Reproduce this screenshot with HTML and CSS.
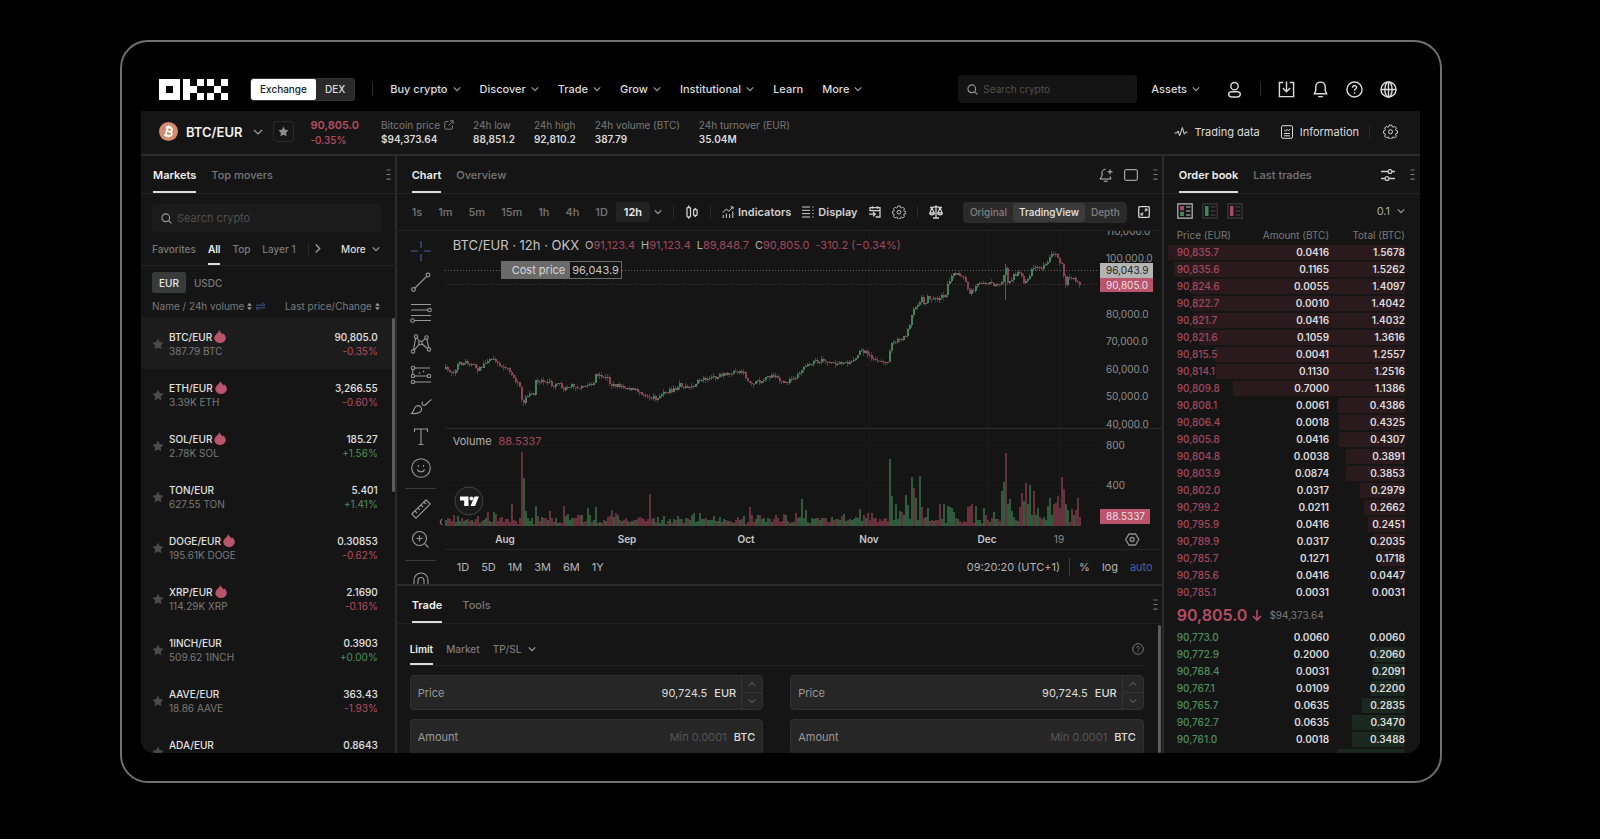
FILE: index.html
```
<!DOCTYPE html>
<html lang="en">
<head>
<meta charset="utf-8">
<title>BTC/EUR | OKX</title>
<link rel="stylesheet" href="styles.css">
</head>
<body>
<svg class="sprite" aria-hidden="true">
  <symbol id="chev" viewBox="0 0 10 10"><path d="M1 3l4 4 4-4"/></symbol>
  <symbol id="up" viewBox="0 0 10 10"><path d="M1 7l4-4 4 4"/></symbol>
  <symbol id="next" viewBox="0 0 10 10"><path d="M3 0.500l4.500 4.500L3 9.500"/></symbol>
  <symbol id="search" viewBox="0 0 12 12"><circle cx="5.200" cy="5.200" r="4.200"/><path d="M8.300 8.300L11.300 11.300"/></symbol>
  <symbol id="star" viewBox="0 0 12 12"><path class="solid" d="M6 0.600l1.700 3.500 3.900.6-2.800 2.700.65 3.850L6 9.450l-3.450 1.800.65-3.850L.4 4.700l3.900-.6z"/></symbol>
  <symbol id="flame" viewBox="0 0 12 13"><path class="solid" d="M5 0C5.600 1.600 7.600 2.600 8.600 4.600 8.900 4.200 9.200 3.800 9.300 3.200 10.800 4.800 11.800 6.300 11.800 8A5.700 5 0 0 1 .3 8C.3 6 1.600 4.600 3 3.400 4.200 2.400 5 1.400 5 0z"/></symbol>
  <symbol id="gear" viewBox="0 0 20 20"><path d="M8.300 1.500h3.400l.6 2.200 1.300.6 2-1.100 2.300 2.300-1.100 2 .6 1.300 2.100.6v2.800l-2.200.7-.5 1.400 1 1.900-2.200 2.300-2-1.100-1.300.5-.6 2.200H8.300l-.6-2.200-1.300-.5-2 1.100-2.300-2.300 1.100-1.900-.5-1.400-2.200-.7V9.400l2.100-.6.600-1.300-1.100-2L4.400 3.200l2 1.100 1.300-.6z"/><circle cx="10" cy="10.300" r="2.700"/></symbol>
  <symbol id="dots" viewBox="0 0 6 14"><path d="M0.500 1.500h5M0.500 7h5M0.500 12.500h5"/></symbol>
  <symbol id="sort" viewBox="0 0 6 10"><path class="solid" d="M3 0.500L5.800 4H.2zM3 9.500L5.800 6H.2z"/></symbol>
</svg>

<div class="frame">
  <header class="top">
    <a class="logo" href="#" aria-label="OKX"><svg viewBox="0 0 69 21" shape-rendering="crispEdges"><path fill-rule="evenodd" d="M0 0h21v21H0zM7 7v7h7V7z"/><path d="M24 0h7v7h7v7h-7v7h-7zM38 0h7v7h-7zM38 14h7v7h-7zM48 0h7v7h-7zM62 0h7v7h-7zM55 7h7v7h-7zM48 14h7v7h-7zM62 14h7v7h-7z"/></svg></a>
    <div class="switch"><button class="on">Exchange</button><button>DEX</button></div>
    <i class="rule"></i>
    <nav class="nav">
      <a href="#">Buy crypto<svg class="ch"><use href="#chev"/></svg></a>
      <a href="#">Discover<svg class="ch"><use href="#chev"/></svg></a>
      <a href="#">Trade<svg class="ch"><use href="#chev"/></svg></a>
      <a href="#">Grow<svg class="ch"><use href="#chev"/></svg></a>
      <a href="#">Institutional<svg class="ch"><use href="#chev"/></svg></a>
      <a href="#">Learn</a>
      <a href="#">More<svg class="ch"><use href="#chev"/></svg></a>
    </nav>
    <label class="search top-search"><svg><use href="#search"/></svg><input type="text" placeholder="Search crypto" aria-label="Search crypto"></label>
    <a class="assets" href="#">Assets<svg class="ch"><use href="#chev"/></svg></a>
    <button class="ic user" aria-label="Account"><svg viewBox="0 0 18 18"><circle cx="9" cy="5.500" r="3.900"/><path d="M5.500 11.300h7a3.200 2.900 0 0 1 0 5.700h-7a3.200 2.900 0 0 1 0-5.700z"/></svg></button>
    <i class="rule"></i>
    <div class="tools">
      <button class="ic" aria-label="Download"><svg viewBox="0 0 18 18"><path d="M5.500 1.500H1.500v15h15v-15h-4M9 0.500v10.500M5.200 7.500L9 11.300l3.800-3.800"/></svg></button>
      <button class="ic" aria-label="Notifications"><svg viewBox="0 0 18 18"><path d="M9 1.200c-3.300 0-5 2.300-5 5.200v3.800L2.500 13.500h13L14 10.200V6.400c0-2.900-1.700-5.200-5-5.200zM6.500 16.500h5"/></svg></button>
      <button class="ic" aria-label="Help"><svg viewBox="0 0 18 18"><circle cx="9" cy="9" r="8"/><path d="M6.800 7.200c0-2.900 4.500-2.700 4.400-.2 0 1.500-2.200 1.600-2.200 3.300M9 11.900v1.500"/></svg></button>
      <button class="ic" aria-label="Language"><svg viewBox="0 0 18 18"><circle cx="9" cy="9" r="8"/><ellipse cx="9" cy="9" rx="3.800" ry="8"/><path d="M1 9h16M9 1v16"/></svg></button>
    </div>
  </header>

  <div class="screen">
    <section class="ticker">
      <svg class="coin" viewBox="0 0 19 19"><circle cx="9.500" cy="9.500" r="9.500" fill="#d48a6c"/><g transform="rotate(12 9.500 9.500)" fill="none" stroke="#fff" stroke-width="1.700"><path d="M6 5.300h4.500a2 2 0 0 1 0 4.100H7.500M7.500 9.400h3.600a2.100 2.100 0 0 1 0 4.300H6M7.500 5.300v8.400"/><path stroke-width="1.200" d="M8.500 3.500v2M10.400 3.500v2M8.500 13.500v2M10.400 13.500v2"/></g></svg>
      <h1>BTC/EUR</h1>
      <svg class="ch pairch"><use href="#chev"/></svg>
      <button class="fav" aria-label="Favorite"><svg><use href="#star"/></svg></button>
      <div class="last red"><b>90,805.0</b><span>-0.35%</span></div>
      <dl class="stats">
        <div><dt>Bitcoin price <svg class="ext" viewBox="0 0 10 10"><path d="M4.500 1.500H2a1.200 1.200 0 0 0-1.200 1.200V8A1.200 1.200 0 0 0 2 9.200h5.300A1.200 1.200 0 0 0 8.500 8V5.500M6 .8h3.200V4M9 1L4.500 5.500"/></svg></dt><dd>$94,373.64</dd></div>
        <div><dt>24h low</dt><dd>88,851.2</dd></div>
        <div><dt>24h high</dt><dd>92,810.2</dd></div>
        <div><dt>24h volume (BTC)</dt><dd>387.79</dd></div>
        <div><dt>24h turnover (EUR)</dt><dd>35.04M</dd></div>
      </dl>
      <div class="links">
        <a href="#"><svg class="i14" viewBox="0 0 14 14"><path d="M0.500 8h2.300l1.200-2 1.600 4.800L8.400 2.500l1.900 6.700 1.200-2h2"/></svg>Trading data</a>
        <a href="#"><svg class="i14" viewBox="0 0 14 14"><rect x="1.500" y=".7" width="11" height="12.600" rx="1.500"/><path d="M4 8.500h6M4 10.800h6M4.200 4.800l1.400 1.400 1.500-1.800 1.400 1.400L10 4"/></svg>Information</a>
        <i class="rule"></i>
        <button class="ic gear" aria-label="Settings"><svg><use href="#gear"/></svg></button>
      </div>
    </section>

    <main class="cols">
      <section class="panel markets">
        <div class="tabs"><button class="on">Markets</button><button>Top movers</button><svg class="dots"><use href="#dots"/></svg></div>
        <label class="search"><svg><use href="#search"/></svg><input type="text" placeholder="Search crypto" aria-label="Search markets"></label>
        <div class="filters">
          <button>Favorites</button><button class="on">All</button><button>Top</button><button>Layer 1</button>
          <i class="rule"></i><svg class="ch nx"><use href="#next"/></svg>
          <button class="more">More<svg class="ch"><use href="#chev"/></svg></button>
        </div>
        <div class="quotes"><button class="on">EUR</button><button>USDC</button></div>
        <div class="list">
          <table class="pairs">
            <thead><tr><th colspan="2">Name / 24h volume <svg class="sort"><use href="#sort"/></svg> <svg class="swap" viewBox="0 0 11 10"><path d="M0.500 3.500h10M7.500 .8l3 2.700M10.500 6.500H.5M3.500 9.200L.5 6.500"/></svg></th><th>Last price/Change <svg class="sort"><use href="#sort"/></svg></th></tr></thead>
            <tbody id="pairs"></tbody>
          </table>
          <i class="thumb"></i>
        </div>
      </section>

      <div class="mid">
        <section class="panel chart">
          <div class="tabs wide"><button class="on">Chart</button><button>Overview</button>
            <span class="tabtools">
              <svg class="i14" viewBox="0 0 14 14"><path d="M6.500 1.200C4 1.200 3 3 3 5v3L1 11h11l-1-2.500M4.800 13.200h4M8.500 3.800h5M11 1.300v5"/></svg>
              <svg class="i14" viewBox="0 0 14 14"><rect x=".7" y="1.700" width="12.600" height="10.600" rx="1"/></svg>
            </span>
            <svg class="dots"><use href="#dots"/></svg></div>
          <div class="bar">
            <div class="frames"><button>1s</button><button>1m</button><button>5m</button><button>15m</button><button>1h</button><button>4h</button><button>1D</button><button class="on">12h</button></div>
            <svg class="ch"><use href="#chev"/></svg>
            <i class="rule"></i>
            <button class="ic" aria-label="Candles"><svg class="i14" viewBox="0 0 14 14"><rect x="2" y="2.500" width="3.500" height="9.500" rx="1"/><path d="M3.700 .5v2M3.700 12v1.700M10.300 3v1.500M10.300 10.500v1.500"/><rect x="8.600" y="4.500" width="3.500" height="6" rx="1"/></svg></button>
            <i class="rule"></i>
            <button class="tool"><svg class="i12" viewBox="0 0 12 12"><path d="M1.200 12V9M4.400 12V7.500M7.600 12V8M10.800 12V5.500M.7 6.500L4.500 3l2.300 2.300L11 1M8.500 .9H11v2.300"/></svg>Indicators</button>
            <button class="tool"><svg class="i12" viewBox="0 0 12 12"><path d="M0 1h8M0 4.300h8M0 7.600h8M0 11h8M10.300 1h1.200M10.300 4.300h1.200M10.300 7.600h1.200M10.300 11h1.200"/></svg>Display</button>
            <button class="ic" aria-label="Go to date"><svg class="i12" viewBox="0 0 12 12"><path d="M1 5V1.700h10V11H6.500M3.500 .3v2.500M8.500 .3v2.500M1 4.700h10M0 8.200h6M4 6l2.300 2.200L4 10.400"/></svg></button>
            <button class="ic" aria-label="Chart settings"><svg class="i14"><use href="#gear"/></svg></button>
            <i class="rule"></i>
            <button class="ic" aria-label="Compare"><svg class="i14" viewBox="0 0 14 14"><path d="M7 .5v12M4 13h6M1 2.500h2.500L7 1.500l3.500 1H13M3 2.800L.8 8h4.400zM11 2.800L8.800 8h4.400z"/><path d="M.8 8a2.200 1.800 0 0 0 4.400 0M8.800 8a2.200 1.800 0 0 0 4.400 0"/></svg></button>
            <div class="seg"><button>Original</button><button class="on">TradingView</button><button>Depth</button></div>
            <button class="ic full" aria-label="Full screen"><svg class="i12" viewBox="0 0 12 12"><rect x=".7" y=".7" width="10.600" height="10.600" rx="1"/><path class="solid" d="M6.500 2.500h3v3zM2.500 6.500v3h3z"/><path d="M8.500 3.500L6.800 5.200M3.500 8.500l1.700-1.700"/></svg></button>
          </div>
          <div class="work">
            <div class="draw">
              <svg class="cross" viewBox="0 0 20 20"><path d="M0 10h7M13 10h7M10 0v7M10 13v7"/></svg>
              <svg viewBox="0 0 20 20"><circle cx="2.500" cy="17.500" r="1.900"/><circle cx="17" cy="3" r="1.900"/><path d="M4 16L15.500 4.500"/></svg>
              <svg viewBox="0 0 20 20"><path d="M0 1.500h20M0 7h17M0 12.500h20M3.500 17.500H20"/><circle cx="18.500" cy="7" r="1.800"/><circle cx="1.500" cy="17.500" r="1.800"/></svg>
              <svg viewBox="0 0 20 20"><circle cx="5" cy="2.500" r="1.700"/><circle cx="15.500" cy="3.500" r="1.700"/><circle cx="9.500" cy="9" r="1.700"/><circle cx="2" cy="17.500" r="1.700"/><circle cx="18" cy="15.500" r="1.700"/><path d="M4.700 4.200L2.500 16M15.800 5.200l2 8.600M5.800 4l3 3.700M14.300 4.700l-3.500 3.200M3.200 16.200l5.200-6M10.900 10l5.700 4.500"/></svg>
              <svg viewBox="0 0 20 20"><path d="M3.500 3H19M3.500 11h13M3.500 17H20M1.700 5v4M8 8.500l1-1M12 7l1-1"/><circle cx="2" cy="3" r="1.700"/><circle cx="2" cy="11" r="1.700"/><circle cx="18" cy="11" r="1.700"/><circle cx="2" cy="17" r="1.700"/></svg>
              <svg viewBox="0 0 20 20"><path d="M0.500 17.500c2.500-1.500 2-6 5-7.500 3-1.300 6 1.500 5 4.300-1.500 3.500-6 3.500-10 3.200zM11.500 5.500c-1 2-.5 4 2 4C16 8 18 5 20.500 3.500"/></svg>
              <svg viewBox="0 0 20 20"><path d="M3.500 5V2h13v3M10 2v15.500M7.500 17.500h5"/></svg>
              <svg viewBox="0 0 20 20"><circle cx="10" cy="10" r="9.300"/><path d="M7.500 7v1.800M12.500 7v1.800M6.500 11.500c1 3 6 3 7 0"/></svg>
              <i class="hr"></i>
              <svg viewBox="0 0 20 20"><path d="M0.800 15L15 .8 19.200 5 5 19.200zM4 12l2 2M7 9l2 2M10 6l2 2M13 3l2 2"/></svg>
              <svg viewBox="0 0 20 20"><circle cx="8.500" cy="8.500" r="7"/><path d="M13.700 13.700l3.800 3.800M8.500 5.500v6M5.500 8.500h6"/></svg>
              <i class="hr"></i>
              <svg viewBox="0 0 20 20"><path d="M3 20V9a7 7 0 0 1 14 0v11M7 20V9.500a3 3 0 0 1 6 0V20"/></svg>
            </div>
            <div class="plotwrap">
              <div class="plot">
                <svg id="plot" class="plotsvg" viewBox="0 0 717 318" role="img" aria-label="BTC/EUR 12h price and volume"></svg>
                <p class="ohlc"><span class="sym">BTC/EUR · 12h · OKX</span><span>O<em>91,123.4</em></span><span>H<em>91,123.4</em></span><span>L<em>89,848.7</em></span><span>C<em>90,805.0</em></span><em>-310.2 (−0.34%)</em></p>
                <p class="cost"><span>Cost price</span><b>96,043.9</b></p>
                <p class="vol">Volume<em>88.5337</em></p>
                <svg class="tv" viewBox="0 0 30 30"><circle cx="15" cy="15" r="14"/><path class="solid" d="M6 10.500h8.500v9.500h-4.300v-5.500H6zM20.500 10.500H25L21 20h-4.500z"/><circle class="solid" cx="17.500" cy="12.500" r="2"/></svg>
                <svg class="fold" viewBox="0 0 4 8"><path d="M3.200 .8L1 4l2.200 3.200"/></svg>
              </div>
              <div class="range">
                <button>1D</button><button>5D</button><button>1M</button><button>3M</button><button>6M</button><button>1Y</button>
                <time>09:20:20 (UTC+1)</time><i class="rule"></i><button>%</button><button>log</button><button class="blue">auto</button>
              </div>
            </div>
          </div>
        </section>
        <section class="panel trade">
          <div class="tabs wide"><button class="on">Trade</button><button>Tools</button><svg class="dots"><use href="#dots"/></svg></div>
          <div class="types"><button class="on">Limit</button><button>Market</button><button>TP/SL<svg class="ch"><use href="#chev"/></svg></button>
            <svg class="help" viewBox="0 0 12 12"><circle cx="6" cy="6" r="5.300"/><path d="M4.600 4.900c0-1.900 2.900-1.800 2.900-.1 0 1-1.500 1-1.500 2.200M6 7.900v1"/></svg></div>
          <form class="forms">
            <div class="field"><label for="p1">Price</label><input id="p1" type="text" value="90,724.5"><b>EUR</b><span class="step"><button type="button" aria-label="Increase"><svg><use href="#up"/></svg></button><button type="button" aria-label="Decrease"><svg><use href="#chev"/></svg></button></span></div>
            <div class="field"><label for="p2">Price</label><input id="p2" type="text" value="90,724.5"><b>EUR</b><span class="step"><button type="button" aria-label="Increase"><svg><use href="#up"/></svg></button><button type="button" aria-label="Decrease"><svg><use href="#chev"/></svg></button></span></div>
            <div class="field"><label for="a1">Amount</label><input id="a1" type="text" placeholder="Min 0.0001"><b>BTC</b></div>
            <div class="field"><label for="a2">Amount</label><input id="a2" type="text" placeholder="Min 0.0001"><b>BTC</b></div>
          </form>
          <i class="thumb"></i>
        </section>
      </div>

      <section class="panel book">
        <div class="tabs"><button class="on">Order book</button><button>Last trades</button>
          <svg class="i14 sliders" viewBox="0 0 14 14"><path d="M0 3.500h7M11 3.500h3M0 10.500h4M8 10.500h6"/><circle cx="9" cy="3.500" r="1.900"/><circle cx="6" cy="10.500" r="1.900"/></svg>
          <svg class="dots"><use href="#dots"/></svg></div>
        <div class="views">
          <button class="view on" aria-label="Both sides"><svg viewBox="0 0 16 16"><path class="frm" d="M.8.8h14.400v14.400H.8z"/><path class="r" d="M3 3h4v4.300H3z"/><path class="g" d="M3 8.700h4V13H3z"/><path d="M9 4h4.500M9 8h4.500M9 12h4.500"/></svg></button>
          <button class="view" aria-label="Bids"><svg viewBox="0 0 16 16"><path class="frm" d="M.8.8h14.400v14.400H.8z"/><path class="g" d="M3 3h3.500v10H3z"/><path d="M8.500 4h5M8.500 8h5M8.500 12h5"/></svg></button>
          <button class="view" aria-label="Asks"><svg viewBox="0 0 16 16"><path class="frm" d="M.8.8h14.400v14.400H.8z"/><path class="r" d="M3 3h3.500v10H3z"/><path d="M8.500 4h5M8.500 8h5M8.500 12h5"/></svg></button>
          <button class="tick">0.1<svg class="ch"><use href="#chev"/></svg></button>
        </div>
        <table class="orders">
          <thead><tr><th>Price (EUR)</th><th>Amount (BTC)</th><th>Total (BTC)</th></tr></thead>
          <tbody id="asks" class="asks"></tbody>
        </table>
        <p class="now"><b>90,805.0</b><svg viewBox="0 0 10 12"><path d="M5 1v10M1 7l4 4 4-4"/></svg><span>$94,373.64</span></p>
        <table class="orders"><tbody id="bids" class="bids"></tbody></table>
      </section>
    </main>
  </div>
</div>
<script src="app.js"></script>
</body>
</html>
```
FILE: styles.css
```
* { box-sizing: border-box; }
html, body { margin: 0; }
body {
  height: 100vh;
  padding: 40px 158px 56px 120px;
  background: #000;
  color: #dcdcdc;
  font: 11px/14px Inter, "Liberation Sans", sans-serif;
  overflow: hidden;
}
h1, p, dl, dd { margin: 0; }
a { color: inherit; text-decoration: none; }
button { padding: 0; border: 0; background: none; color: inherit; font: inherit; display: flex; align-items: center; cursor: pointer; }
input { min-width: 0; padding: 0; border: 0; outline: 0; background: none; color: inherit; font: inherit; }
em { font-style: normal; color: #a3485f; }
svg { fill: none; stroke: currentColor; flex: none; display: block; overflow: visible; }
.sprite { position: absolute; width: 0; height: 0; }
.solid { fill: currentColor; stroke: none; }
.red { color: #b54c64; }
.green { color: #4c8f5b; }
.ch { width: 8px; height: 8px; stroke-width: 1.400; color: #a0a0a0; }
.i14 { width: 14px; height: 14px; }
.i12 { width: 12px; height: 12px; }
.rule { width: 1px; height: 12px; background: #2a2a2a; flex: none; }

.frame {
  height: 100%;
  display: flex;
  flex-direction: column;
  padding: 25px 20px 28px 19px;
  border: 2px solid #707070;
  border-radius: 28px;
}

.top { height: 44px; flex: none; display: flex; align-items: center; padding: 0 23px 0 18px; }
.logo svg { width: 69px; height: 21px; fill: #fff; stroke: none; }
.switch { display: flex; height: 23px; margin-left: 22px; border-radius: 3px; background: #292929; overflow: hidden; font-size: 10px; font-weight: 500; border: 1px solid #333; }
.switch button { padding: 0 9px; }
.switch .on { background: #fff; color: #222; border-radius: 2px; }
.top > .rule { margin-left: 17px; height: 14px; }
.nav { display: flex; gap: 19px; margin-left: 17px; font-weight: 500; white-space: nowrap; }
.nav a, .assets { display: flex; align-items: center; gap: 5px; font-weight: 500; }
.search { display: flex; align-items: center; gap: 5px; height: 28px; padding: 0 9px; border-radius: 4px; background: #1b1b1b; color: #9a9a9a; font-size: 11px; }
.search svg { width: 11px; height: 11px; stroke-width: 1.200; }
.search input { flex: 1; }
.search input::placeholder { color: #505050; opacity: 1; }
.top .search { width: 179px; margin-left: auto; background: #141414; font-size: 10px; }
.assets { margin-left: 14px; }
.ic svg { stroke-width: 1.300; }
.user { margin-left: 26px; }
.user svg, .tools svg { width: 17px; height: 17px; stroke-width: 1.500; }
.tools { display: flex; gap: 17px; margin-left: 17px; }

.screen { flex: 1; min-height: 0; display: flex; flex-direction: column; overflow: hidden; border-radius: 0 0 14px 14px; background: #151515; }
.ticker { height: 45px; flex: none; display: flex; align-items: center; padding: 0 22px 2px 18px; border-bottom: 2px solid #2b2b2b; white-space: nowrap; }
.coin { width: 19px; height: 19px; stroke: none; }
.ticker h1 { margin-left: 8px; font-size: 13px; font-weight: 600; color: #f0f0f0; }
.pairch { width: 10px; height: 10px; margin-left: 11px; stroke-width: 1.200; }
.fav { width: 21px; height: 21px; justify-content: center; margin-left: 10px; border: 1px solid #2b2b2b; border-radius: 4px; color: #8a8a8a; }
.fav svg { width: 11px; height: 11px; }
.last { display: grid; gap: 2px; margin-left: 16px; }
.last b { font-size: 11px; font-weight: 600; }
.last span { font-size: 10px; font-weight: 500; line-height: 12px; }
.stats { display: flex; gap: 19px; margin-left: 22px; font-size: 10px; }
.stats dt { display: flex; align-items: center; gap: 4px; color: #7a7a7a; }
.stats dd { font-weight: 600; }
.ext { width: 10px; height: 10px; }
.links { display: flex; align-items: center; margin-left: auto; }
.links a { display: flex; align-items: center; gap: 6px; margin-right: 20px; }
.links a + a { margin-right: 10px; }
.gear { margin-left: 13px; }
.gear svg { width: 15px; height: 15px; }

.cols { flex: 1; min-height: 0; display: grid; grid-template-columns: minmax(0, 199fr) minmax(0, 600fr) minmax(0, 201fr); gap: 2px; background: #2b2b2b; }
.panel { min-width: 0; min-height: 0; overflow: hidden; background: #151515; }
.mid { display: flex; flex-direction: column; gap: 2px; min-width: 0; min-height: 0; }
.tabs { height: 38px; flex: none; display: flex; align-items: stretch; gap: 15px; padding: 0 4px 0 12px; border-bottom: 1px solid #222; color: #777; font-weight: 500; white-space: nowrap; }
.tabs button.on { color: #f0f0f0; font-weight: 600; box-shadow: inset 0 -2px #ddd; }
.tabs .dots { margin: auto 0 auto auto; }
.wide { padding-left: 15px; }
.tabtools { display: flex; align-items: center; gap: 11px; margin-left: auto; color: #c0c0c0; }
.tabtools + .dots { margin-left: 0; }
.dots { width: 5px; height: 13px; color: #777; stroke-width: 1.300; }

.markets { display: flex; flex-direction: column; }
.markets .search { margin: 10px 14px 0 11px; flex: none; }
.filters { height: 34px; flex: none; display: flex; align-items: stretch; gap: 12px; padding: 0 15px 0 11px; border-bottom: 1px solid #222; color: #7a7a7a; font-size: 10px; font-weight: 500; white-space: nowrap; }
.filters .on { color: #f0f0f0; font-weight: 600; box-shadow: inset 0 -2px #ddd; }
.filters .rule, .filters .nx { align-self: center; }
.filters .nx { width: 9px; height: 9px; margin-left: -8px; }
.filters .more { gap: 6px; margin-left: auto; color: #dcdcdc; }
.quotes { display: flex; margin: 6px 11px 0; font-size: 10px; font-weight: 500; color: #7a7a7a; }
.quotes button { height: 21px; padding: 0 7px; margin-right: 1px; border-radius: 2px; }
.quotes .on { background: #393b3b; color: #e8e8e8; }
.list { position: relative; flex: 1; min-height: 0; overflow: hidden; }
.pairs { width: 100%; border-collapse: collapse; font-size: 10px; white-space: nowrap; }
.pairs th { height: 25px; padding: 0 0 0 11px; color: #7a7a7a; font-weight: 400; text-align: left; }
.pairs th:last-child { padding: 0 15px 0 0; text-align: right; }
.pairs th svg { display: inline-block; vertical-align: -1px; }
.sort { width: 5px; height: 9px; color: #9a9a9a; }
.swap { width: 11px; height: 9px; color: #4161a8; }
.pairs td { height: 51px; padding: 0; }
.pairs tbody tr:first-child td { background: #1c1c1c; }
.pairs td:first-child { width: 28px; padding: 0 0 0 11px; color: #4a4a4a; }
.pairs td:first-child svg { width: 12px; height: 12px; }
.pairs td:last-child { padding-right: 17px; text-align: right; }
.pairs b { display: flex; align-items: center; gap: 2px; height: 14px; color: #e2e2e2; font-weight: 500; }
.pairs b svg { width: 12px; height: 13px; color: #b9546b; stroke: none; }
.pairs td:last-child b { justify-content: flex-end; }
.pairs span { display: block; }
.pairs .dim { color: #7a7a7a; font-weight: 400; }
.thumb { position: absolute; right: 0; width: 3px; border-radius: 2px; background: #5c5c5c; }
.list .thumb { top: 25px; height: 174px; }

.bar { height: 37px; display: flex; align-items: center; gap: 11px; padding: 0 12px 0 7px; border-bottom: 1px solid #222; white-space: nowrap; color: #d0d0d0; }
.frames { display: flex; color: #777; font-weight: 500; }
.frames button { height: 20px; padding: 0 8px; border-radius: 3px; }
.frames .on { background: #222; color: #eee; font-weight: 600; }
.frames + .ch { margin-left: -7px; }
.tool { gap: 4px; font-weight: 600; }
.seg { display: flex; height: 21px; padding: 1px; margin-left: auto; border-radius: 4px; background: #2a2a2a; color: #808080; font-size: 10px; font-weight: 500; }
.seg button { padding: 0 6px; border-radius: 3px; }
.seg .on { background: #3b3b3b; color: #e8e8e8; }
.work { display: flex; height: 353px; }
.draw { width: 48px; flex: none; overflow: hidden; display: flex; flex-direction: column; align-items: center; gap: 11px; padding-top: 10px; color: #9a9a9a; }
.draw svg { width: 20px; height: 20px; stroke-width: 1.100; }
.draw .cross { color: #4161a8; }
.hr { width: 31px; height: 1px; margin: -1px 0; background: #3c3c3c; flex: none; }
.plotwrap { flex: 1; min-width: 0; }
.plot { position: relative; border-bottom: 1px solid #262626; }
.plotsvg { width: 100%; height: auto; overflow: hidden; stroke: none; }
.plotsvg text { fill: #8f8f8f; font-size: 10px; }
.plotsvg .mon { fill: #c8c8c8; font-weight: 600; }
.plotsvg .lab { fill: #f3dfe3; }
.plotsvg .labd { fill: #222; }
.ohlc, .cost, .vol, .tv, .fold { position: absolute; }
.ohlc { left: 8px; top: 5px; display: flex; align-items: center; gap: 6px; line-height: 18px; white-space: nowrap; color: #b0b0b0; }
.sym { font-size: 13px; color: #c4c4c4; }
.cost { left: 56px; top: 30px; display: flex; height: 18px; line-height: 16px; border: 1px solid #6a6a6a; background: #151515; color: #c8c8c8; }
.cost span { padding: 0 5px 0 10px; background: #6a6a6a; color: #d8d8d8; }
.cost b { padding: 0 2px; font-weight: 400; }
.vol { left: 8px; top: 203px; display: flex; gap: 7px; color: #b0b0b0; }
.tv { left: 9px; top: 255px; width: 30px; height: 30px; fill: #1b1b1b; stroke: #444; color: #fff; }
.tv .solid { fill: #fff; stroke: none; }
.fold { left: -6px; top: 287px; width: 4px; height: 8px; color: #9a9a9a; }
.range { height: 33px; display: flex; align-items: center; gap: 12px; padding: 0 9px 0 12px; color: #b4b4b4; white-space: nowrap; }
.range time { margin-left: auto; }
.range .rule { height: 18px; background: #3c3c3c; margin: 0 -3px; }
.blue { color: #4560a8; }

.trade { position: relative; flex: 1; }
.trade .tabs { gap: 20px; }
.types { display: flex; height: 42px; align-items: stretch; gap: 13px; margin: 0 18px 0 13px; padding-top: 8px; border-bottom: 1px solid #222; color: #7a7a7a; font-size: 10px; font-weight: 500; }
.types .on { color: #f0f0f0; font-weight: 600; box-shadow: inset 0 -2px #ddd; }
.types button { gap: 7px; }
.help { width: 12px; height: 12px; margin: auto 0 auto auto; color: #777; }
.forms { display: grid; grid-template-columns: 1fr 1fr; gap: 9px 27px; margin: 9px 18px 0 13px; }
.field { height: 35px; display: flex; align-items: center; gap: 7px; padding: 0 7px; border: 1px solid #303030; border-radius: 4px; background: #262626; }
.field label { color: #9a9a9a; }
.field input { flex: 1; text-align: right; }
.field input::placeholder { color: #555; opacity: 1; }
.field b { font-weight: 500; }
.step { align-self: stretch; width: 21px; display: grid; margin: 0 -7px 0 -2px; border-left: 1px solid #333; }
.step button { justify-content: center; }
.step button + button { border-top: 1px solid #333; }
.step svg { width: 8px; height: 8px; color: #888; }
.trade .thumb { right: 1px; top: 39px; bottom: 0; }

.book .tabs { padding-left: 15px; padding-right: 5px; }
.sliders { margin: auto 0 auto auto; color: #c8c8c8; stroke-width: 1.300; }
.book .tabs .dots { margin-left: 0; }
.views { display: flex; align-items: center; gap: 9px; height: 33px; padding: 0 15px 0 13px; color: #a8a8a8; }
.view { color: #4a4a4a; }
.view svg { width: 16px; height: 16px; }
.view .frm { stroke: #3a3a3a; stroke-width: 1.200; }
.view.on { color: #bbb; }
.view.on .frm { stroke: #bbb; }
.view .r, .view .g { stroke: none; }
.view .r { fill: #a84a60; }
.view .g { fill: #46855a; }
.tick { gap: 7px; margin-left: auto; }
.orders { width: calc(100% - 19px); margin-left: 4px; border-collapse: collapse; table-layout: fixed; font-size: 10px; line-height: 15px; font-weight: 600; }
.orders th { height: 17px; padding: 0; color: #7a7a7a; font-weight: 400; text-align: right; white-space: nowrap; }
.orders td { height: 17px; padding: 0; text-align: right; }
.orders th:first-child, .orders td:first-child { width: 33%; padding-left: 9px; text-align: left; }
.orders th:nth-child(2), .orders td:nth-child(2) { width: 35%; }
.orders tr { --bar: #2b1a1d; }
.bids tr { --bar: #1b2820; }
.orders tbody tr { background: linear-gradient(to left, var(--bar) var(--depth), transparent 0) 0 1px / 100% 15px no-repeat; }
.orders td:first-child { font-weight: 500; }
.asks td:first-child { color: #a3485f; }
.bids td:first-child { color: #4c8f5b; }
.now { display: flex; align-items: center; gap: 5px; height: 28px; padding-left: 13px; color: #b54c64; }
.now b { font-size: 16px; font-weight: 600; }
.now svg { width: 10px; height: 12px; stroke-width: 1.600; }
.now span { margin-left: 2px; color: #7a7a7a; font-size: 10px; }
```
FILE: app.js
```
const pairs = [
  ['BTC/EUR', '387.79 BTC', '90,805.0', '-0.35%', 1],
  ['ETH/EUR', '3.39K ETH', '3,266.55', '-0.60%', 1],
  ['SOL/EUR', '2.78K SOL', '185.27', '+1.56%', 1],
  ['TON/EUR', '627.55 TON', '5.401', '+1.41%', 0],
  ['DOGE/EUR', '195.61K DOGE', '0.30853', '-0.62%', 1],
  ['XRP/EUR', '114.29K XRP', '2.1690', '-0.16%', 1],
  ['1INCH/EUR', '509.62 1INCH', '0.3903', '+0.00%', 0],
  ['AAVE/EUR', '18.86 AAVE', '363.43', '-1.93%', 0],
  ['ADA/EUR', '', '0.8643', '', 0]
];
document.getElementById('pairs').innerHTML = pairs.map(([n, v, p, c, hot]) =>
  `<tr><td><button aria-label="Favorite ${n}"><svg><use href="#star"/></svg></button></td>` +
  `<td><b>${n}${hot ? '<svg><use href="#flame"/></svg>' : ''}</b><span class="dim">${v || '&nbsp;'}</span></td>` +
  `<td><b>${p}</b><span class="${c[0] === '-' ? 'red' : 'green'}">${c || '&nbsp;'}</span></td></tr>`).join('');

const asks = `90,835.7 0.0416 1.5678
90,835.6 0.1165 1.5262
90,824.6 0.0055 1.4097
90,822.7 0.0010 1.4042
90,821.7 0.0416 1.4032
90,821.6 0.1059 1.3616
90,815.5 0.0041 1.2557
90,814.1 0.1130 1.2516
90,809.8 0.7000 1.1386
90,808.1 0.0061 0.4386
90,806.4 0.0018 0.4325
90,805.8 0.0416 0.4307
90,804.8 0.0038 0.3891
90,803.9 0.0874 0.3853
90,802.0 0.0317 0.2979
90,799.2 0.0211 0.2662
90,795.9 0.0416 0.2451
90,789.9 0.0317 0.2035
90,785.7 0.1271 0.1718
90,785.6 0.0416 0.0447
90,785.1 0.0031 0.0031`;
const bids = `90,773.0 0.0060 0.0060
90,772.9 0.2000 0.2060
90,768.4 0.0031 0.2091
90,767.1 0.0109 0.2200
90,765.7 0.0635 0.2835
90,762.7 0.0635 0.3470
90,761.0 0.0018 0.3488`;
const row = (depth, cells) =>
  `<tr style="--depth:${(depth / 1.5678 * 100).toFixed(1)}%"><td>${cells.join('</td><td>')}</td></tr>`;
const rows = text => text.split('\n').map(line => {
  const cells = line.split(' ');
  return row(cells[2], cells);
}).join('');
document.getElementById('asks').innerHTML = rows(asks);
document.getElementById('bids').innerHTML = rows(bids) + row(0.45, ['', '', '']);

// Close prices as [x, y] in chart units; bars between them are interpolated.
const path = [[0,138],[2,140],[10,140],[12,133],[20,131],[27,134],[33,139],[40,131],[49,127],[52,133],[63,138],[67,147],[73,151],[77,177],[80,166],[88,162],[90,149],[103,150],[107,156],[112,150],[118,158],[127,154],[137,157],[148,151],[150,145],[162,147],[165,154],[175,155],[185,158],[195,161],[205,167],[213,167],[218,161],[232,158],[233,153],[245,158],[255,148],[272,146],[292,140],[298,142],[303,152],[313,151],[325,145],[335,149],[340,152],[347,146],[352,144],[362,132],[380,130],[390,134],[395,131],[407,132],[415,119],[421,121],[424,126],[439,132],[443,128],[445,111],[459,106],[465,94],[467,77],[472,76],[476,65],[478,75],[482,66],[493,69],[500,62],[505,45],[509,42],[518,46],[524,63],[532,54],[538,50],[552,54],[557,49],[560,36],[562,52],[568,44],[574,42],[578,51],[582,50],[586,38],[595,37],[603,29],[608,22],[612,27],[617,36],[619,57],[622,45],[628,46],[632,51],[635,55]];
const spikes = {76:[74,0],78:[48,1],80:[15,1],66:[22,0],73:[23,0],90:[20,1],42:[14,0],50:[12,0],118:[20,0],122:[12,1],104:[15,0],142:[18,1],150:[19,1],166:[16,0],204:[32,0],170:[13,0],248:[13,1],254:[13,1],304:[19,0],312:[11,1],330:[11,0],338:[12,0],356:[27,1],360:[16,1],398:[12,1],414:[17,1],422:[13,0],426:[13,0],444:[67,1],446:[30,1],450:[22,1],454:[15,1],460:[31,1],462:[21,1],466:[49,1],468:[38,0],470:[28,1],474:[50,1],476:[19,0],482:[18,1],494:[22,0],498:[22,1],502:[20,1],504:[19,1],506:[18,1],522:[19,0],524:[20,0],526:[22,0],530:[20,1],548:[14,1],556:[35,1],558:[44,1],560:[73,0],562:[22,1],564:[27,1],574:[19,0],576:[33,0],578:[25,1],580:[43,0],582:[22,1],584:[41,1],588:[35,0],592:[18,1],602:[20,1],604:[28,1],608:[22,0],610:[23,0],612:[30,0],614:[18,0],616:[49,0],618:[37,0],620:[22,1],622:[16,1],632:[28,0],630:[16,0],634:[9,0]};
let seed = 7;
const rnd = () => (seed = (seed * 16807) % 2147483647) / 2147483647;
const R = '#8f4255', G = '#43835a', VR = '#67303d', VG = '#2f5a3c';
const rect = (x, y, w, h, f) => `<rect x="${x}" y="${y}" width="${w}" height="${h}" fill="${f}"/>`;
const at = x => {
  let i = 1;
  while (i < path.length - 1 && path[i][0] < x) i++;
  const [a, b] = [path[i - 1], path[i]];
  return a[1] + (b[1] - a[1]) * Math.min(1, (x - a[0]) / (b[0] - a[0]));
};
let out = '';
for (const x of [424, 543, 614]) out += rect(x, 0, 1, 295, '#1b1b1b');
for (const y of [214, 254]) out += rect(0, y, 653, 1, '#191919');
out += rect(0, 197, 717, 1, '#2b2b2b');
out += '<path d="M0 39.500H653" stroke="#666" stroke-dasharray="1 2"/><path d="M0 53.500H653" stroke="#5a2a36" stroke-dasharray="1 2"/>';
let prev = at(0);
for (let x = 0; x <= 634; x += 2) {
  const close = Math.round(at(x) + (rnd() - 0.5) * 4);
  const up = close < prev, top = Math.min(prev, close), h = Math.max(1, Math.abs(close - prev));
  const wt = Math.round(rnd() * 3), wb = Math.round(rnd() * 3);
  out += `<rect x="${x}" y="${top - wt}" width="1" height="${h + wt + wb}" fill="${up ? G : R}" opacity=".6"/>`;
  out += rect(x, top, 2, h, up ? G : R);
  const s = spikes[x];
  const busy = x > 440 ? 14 : 10;
  const vh = s ? s[0] : Math.round(2 + rnd() * rnd() * busy + rnd() * 4);
  out += rect(x, 295 - vh, 2, vh, (s ? s[1] : up) ? VG : VR);
  prev = close;
}
out += rect(560, 33, 1, 36, R);
const label = (x, y, t, c = '') => `<text x="${x}" y="${y}" class="${c}">${t}</text>`;
[['110,000.0', 4], ['100,000.0', 31], ['80,000.0', 87], ['70,000.0', 114], ['60,000.0', 142], ['50,000.0', 169], ['40,000.0', 197], ['800', 218], ['400', 258]]
  .forEach(([t, y]) => out += label(661, y, t));
out += rect(655, 32, 53, 15, '#b4b4b4') + label(661, 43, '96,043.9', 'labd');
out += rect(655, 47, 53, 14, '#b9546b') + label(661, 58, '90,805.0', 'lab');
out += rect(655, 278, 50, 15, '#b9546b') + label(661, 289, '88.5337', 'lab');
[['Aug', 60], ['Sep', 182], ['Oct', 301], ['Nov', 424], ['Dec', 542]]
  .forEach(([t, x]) => out += `<text x="${x}" y="312" text-anchor="middle" class="mon">${t}</text>`);
out += '<text x="614" y="312" text-anchor="middle">19</text>';
out += '<g fill="none" stroke="#8f8f8f" stroke-width="1.300"><path d="M684 303h6.500l3.300 5.500-3.300 5.500H684l-3.300-5.500z"/><circle cx="687.200" cy="308.500" r="2"/></g>';
document.getElementById('plot').innerHTML = out;
```
